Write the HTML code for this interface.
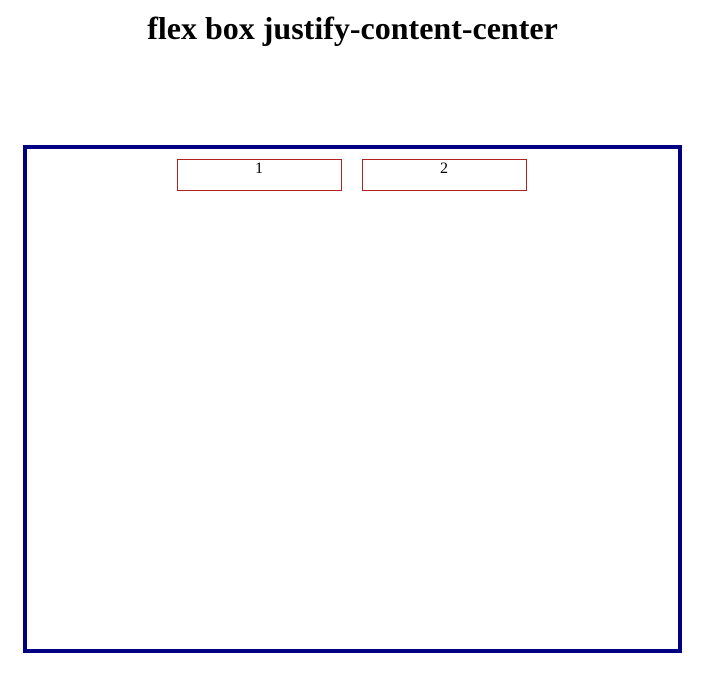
<!DOCTYPE html>
<html><head><style>
html,body{margin:0;padding:0;background:#fff;}
body{width:705px;height:685px;position:relative;font-family:"Liberation Serif",serif;}
h1{position:absolute;top:10px;left:0;width:705px;margin:0;text-align:center;font-size:32px;font-weight:bold;line-height:36px;}
.box{position:absolute;left:23px;top:145px;width:651px;height:500px;border:4px solid #000080;display:flex;justify-content:center;align-items:flex-start;}
.item{position:relative;left:-1px;width:163px;height:30px;border:1px solid #b22222;margin:10px 10px;text-align:center;font-size:16px;line-height:18px;}
</style></head><body>
<h1>flex box justify-content-center</h1>
<div class="box"><div class="item">1</div><div class="item">2</div></div>
</body></html>
